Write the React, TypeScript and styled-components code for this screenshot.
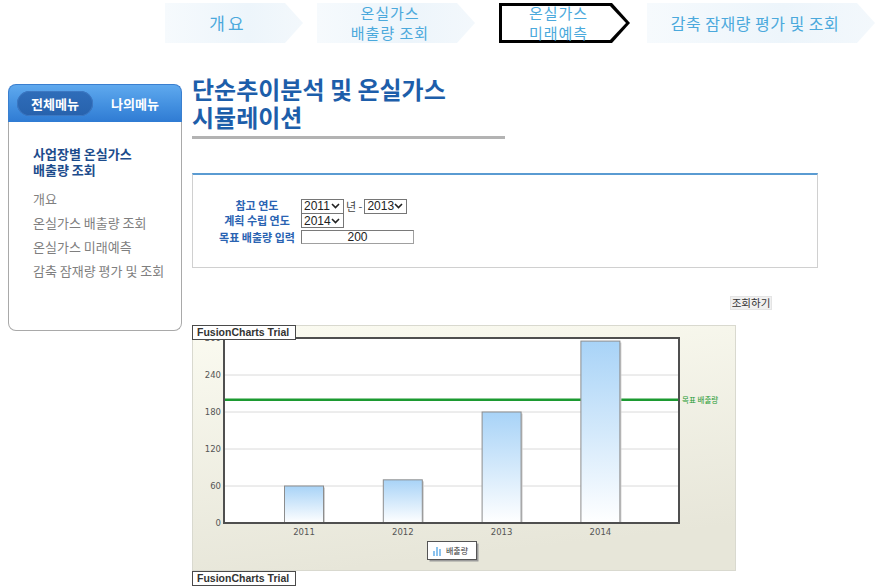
import React from "react";
import styled, { createGlobalStyle, css } from "styled-components";

const GlobalStyle = createGlobalStyle`
  html, body { margin: 0; padding: 0; background: #ffffff; }
  body { font-family: "Noto Sans CJK KR", "Noto Sans", sans-serif; }
`;

const KR = `"Noto Sans CJK KR", "Noto Sans", sans-serif`;

const Page = styled.div`
  width: 879px;
  height: 587px;
  overflow: hidden;
`;

/* ---------- top step navigation ---------- */
const TopNav = styled.nav`
  display: flex;
  height: 40px;
  padding: 3px 0 2px 165px;
`;

const NavItem = styled.div<{ $w: number; $after: number; $active?: boolean }>`
  position: relative;
  flex-shrink: 0;
  box-sizing: border-box;
  width: ${(p) => p.$w}px;
  margin-right: ${(p) => p.$after}px;
  padding-right: 12px;
  display: flex;
  align-items: center;
  justify-content: center;
  text-align: center;
  color: #4ba9dc;
  clip-path: polygon(0 0, calc(100% - 18px) 0, 100% 50%, calc(100% - 18px) 100%, 0 100%);
  background: ${(p) =>
    p.$active ? "#000000" : "linear-gradient(to right, #f6fafd 0%, #edf5fb 60%, #f3f8fc 100%)"};
  ${(p) =>
    p.$active &&
    css`
      &::before {
        content: "";
        position: absolute;
        inset: 3px 4px 3px 3px;
        background: #ffffff;
        clip-path: polygon(0 0, calc(100% - 16px) 0, 100% 50%, calc(100% - 16px) 100%, 0 100%);
      }
    `}
`;

const NavLabel = styled.span<{ $size: number; $ls: number }>`
  position: relative;
  font-family: ${KR};
  font-size: ${(p) => p.$size}px;
  letter-spacing: ${(p) => p.$ls}px;
  line-height: 20px;
  white-space: nowrap;
`;

/* ---------- body ---------- */
const Body = styled.div`
  display: flex;
  align-items: flex-start;
`;

const Sidebar = styled.aside`
  flex-shrink: 0;
  width: 174px;
  margin: 39px 0 0 8px;
`;

const SideHeader = styled.div`
  height: 38px;
  box-sizing: border-box;
  padding: 0 0 0 8px;
  display: flex;
  align-items: center;
  border-radius: 8px 8px 0 0;
  background: linear-gradient(to bottom, #5fa9ee 0%, #4390e0 55%, #2f7bd3 100%);
  border: 1px solid #3a7fcf;
  border-bottom: none;
`;

const SideTab = styled.div<{ $active?: boolean }>`
  height: 25px;
  width: ${(p) => (p.$active ? 76 : 84)}px;
  display: flex;
  align-items: center;
  justify-content: center;
  border-radius: 13px;
  font-family: ${KR};
  font-size: 13px;
  font-weight: 700;
  color: #ffffff;
  background: ${(p) => (p.$active ? "linear-gradient(#2f6db9, #2762ad)" : "transparent")};
  box-shadow: ${(p) => (p.$active ? "inset 0 0 0 1px #3d78c2" : "none")};
`;

const SideBody = styled.div`
  height: 209px;
  box-sizing: border-box;
  padding: 24px 0 0 24px;
  border: 1px solid #a9a9a9;
  border-top: none;
  border-radius: 0 0 8px 8px;
`;

const SideHeading = styled.div`
  font-family: ${KR};
  font-size: 13px;
  font-weight: 700;
  line-height: 16px;
  color: #1d4c8c;
  margin-bottom: 9px;
`;

const SideLink = styled.div`
  font-family: ${KR};
  font-size: 13px;
  line-height: 24px;
  color: #7f7f7f;
`;

const Main = styled.main`
  width: 626px;
  margin: 30px 0 0 10px;
`;

const Title = styled.h1`
  margin: 0;
  font-family: ${KR};
  font-size: 24px;
  font-weight: 700;
  line-height: 28px;
  color: #1d5eaa;
`;

const TitleRule = styled.div`
  width: 313px;
  height: 3px;
  margin-top: 5px;
  background: #b3b3b3;
`;

const FormPanel = styled.section`
  margin-top: 34px;
  height: 95px;
  box-sizing: border-box;
  padding: 23px 0 0 23px;
  border: 1px solid #d0d0d0;
  border-top: 2px solid #5a9bd2;
`;

const FormGrid = styled.div`
  display: grid;
  grid-template-columns: 82px auto;
  grid-template-rows: 15px 17px 14px;
  column-gap: 3px;
  align-items: start;
`;

const FieldLabel = styled.div`
  font-family: ${KR};
  font-size: 11px;
  font-weight: 700;
  line-height: 15px;
  color: #2a63b2;
  text-align: center;
  white-space: nowrap;
`;

const FieldRow = styled.div`
  display: flex;
  align-items: center;
  gap: 2px;
`;

const SelectBox = styled.div`
  width: 43px;
  height: 15px;
  box-sizing: border-box;
  border: 1px solid #767676;
  display: flex;
  align-items: center;
  justify-content: space-between;
  padding: 0 3px 0 2px;
  font-family: "Liberation Sans", Arial, sans-serif;
  font-size: 12px;
  color: #222;
  background: #fff;
`;

const Sep = styled.span`
  font-family: ${KR};
  font-size: 11px;
  color: #444;
  white-space: nowrap;
`;

const TextBox = styled.div`
  width: 113px;
  height: 14px;
  box-sizing: border-box;
  border: 1px solid #a0a0a0;
  border-top-color: #7a7a7a;
  border-left-color: #7a7a7a;
  font-family: "Liberation Sans", Arial, sans-serif;
  font-size: 12px;
  line-height: 12px;
  text-align: center;
  color: #222;
`;

const ButtonRow = styled.div`
  display: flex;
  justify-content: flex-end;
  margin-top: 28px;
  padding-right: 46px;
`;

const SearchButton = styled.button`
  height: 14px;
  width: 42px;
  padding: 0;
  border: 1px solid #e4e4e4;
  background: #f0f0f0;
  font-family: ${KR};
  font-size: 10.5px;
  line-height: 12px;
  color: #333;
`;

const ChartWrap = styled.div`
  position: relative;
  width: 544px;
  height: 246px;
  margin-top: 15px;
`;

const TrialTag = styled.div`
  width: 104px;
  height: 15px;
  box-sizing: border-box;
  border: 1px solid #4a4a4a;
  background: #ffffff;
  padding-left: 4px;
  font-family: "Liberation Sans", Arial, sans-serif;
  font-size: 10.5px;
  font-weight: 700;
  line-height: 13px;
  color: #333;
  white-space: nowrap;
`;

const OverlayTag = styled(TrialTag)`
  position: absolute;
  top: 0;
  left: 0;
`;

const Chevron = () => (
  <svg width="9" height="6" viewBox="0 0 9 6">
    <path d="M1 1 L4.5 4.5 L8 1" fill="none" stroke="#222" strokeWidth="1.6" />
  </svg>
);

const Select = ({ value }: { value: string }) => (
  <SelectBox>
    <span>{value}</span>
    <Chevron />
  </SelectBox>
);

/* ---------- chart ---------- */
const yOf = (v: number) => 198 - (v * 185) / 300;
const bars = [
  { year: "2011", v: 60 },
  { year: "2012", v: 70 },
  { year: "2013", v: 180 },
  { year: "2014", v: 295 },
];

const Chart = () => {
  const axisFont = { fontFamily: "'DejaVu Sans', Verdana, sans-serif", fontSize: 8.5, fill: "#555" };
  return (
    <svg width="544" height="246" viewBox="0 0 544 246" style={{ display: "block" }}>
      <defs>
        <linearGradient id="bg" x1="0" y1="0" x2="0.25" y2="1">
          <stop offset="0" stopColor="#fbfbf1" />
          <stop offset="1" stopColor="#e7e6d9" />
        </linearGradient>
        <linearGradient id="bar" x1="0" y1="0" x2="0" y2="1">
          <stop offset="0" stopColor="#a8d3f7" />
          <stop offset="1" stopColor="#ffffff" />
        </linearGradient>
      </defs>
      <rect x="0.5" y="0.5" width="543" height="245" fill="url(#bg)" stroke="#d9d9cf" />
      <rect x="32" y="13" width="455" height="185" fill="#ffffff" />
      {[60, 120, 180, 240].map((v) => (
        <line key={v} x1="32" x2="487" y1={yOf(v)} y2={yOf(v)} stroke="#dadada" strokeWidth="1" />
      ))}
      {[0, 60, 120, 180, 240, 300].map((v) => (
        <text key={v} x="29" y={yOf(v) + 3} textAnchor="end" {...axisFont}>
          {v}
        </text>
      ))}
      <line x1="32" x2="487" y1={yOf(200)} y2={yOf(200)} stroke="#1c9a31" strokeWidth="2.5" />
      <text x="490" y={yOf(200) + 3} fontFamily={KR} fontSize="7.5" fill="#1c9a31">
        목표 배출량
      </text>
      {bars.map((b, i) => {
        const x = 92.5 + i * 98.8;
        const top = yOf(b.v);
        return (
          <g key={b.year}>
            <rect x={x + 1.5} y={top + 1.5} width="39" height={198 - top - 1.5} fill="#cfcfcf" />
            <rect x={x} y={top} width="39" height={198 - top} fill="url(#bar)" stroke="#8d8d8d" strokeWidth="1" />
            <text x={x + 19.5} y="210" textAnchor="middle" {...axisFont}>
              {b.year}
            </text>
          </g>
        );
      })}
      <rect x="32" y="13" width="455" height="185" fill="none" stroke="#4f4f4f" strokeWidth="2" />
      <rect x="237.5" y="218.5" width="49" height="18" fill="#9a9a9a" />
      <rect x="235.5" y="216.5" width="49" height="18" fill="#ffffff" stroke="#555" strokeWidth="1" />
      <g fill="#8cc3ee">
        <rect x="241" y="226" width="2" height="5" />
        <rect x="244" y="222" width="2" height="9" />
        <rect x="247" y="224" width="2" height="7" />
      </g>
      <text x="254" y="228.5" fontFamily={KR} fontSize="8" fill="#333">
        배출량
      </text>
    </svg>
  );
};

const navItems = [
  { lines: ["개요"], w: 138, after: 14, size: 17, ls: 3 },
  { lines: ["온실가스", "배출량 조회"], w: 158, after: 24, size: 15, ls: 1 },
  { lines: ["온실가스", "미래예측"], w: 131, after: 17, size: 15, ls: 1, active: true },
  { lines: ["감축 잠재량 평가 및 조회"], w: 228, after: 0, size: 16, ls: 0.5 },
];

const sideLinks = ["개요", "온실가스 배출량 조회", "온실가스 미래예측", "감축 잠재량 평가 및 조회"];

export default function App() {
  return (
    <Page>
      <GlobalStyle />
      <TopNav>
        {navItems.map((n, i) => (
          <NavItem key={i} $w={n.w} $after={n.after} $active={n.active}>
            <NavLabel $size={n.size} $ls={n.ls}>
              {n.lines.map((l, j) => (
                <React.Fragment key={j}>
                  {j > 0 && <br />}
                  {l}
                </React.Fragment>
              ))}
            </NavLabel>
          </NavItem>
        ))}
      </TopNav>
      <Body>
        <Sidebar>
          <SideHeader>
            <SideTab $active>전체메뉴</SideTab>
            <SideTab>나의메뉴</SideTab>
          </SideHeader>
          <SideBody>
            <SideHeading>
              사업장별 온실가스
              <br />
              배출량 조회
            </SideHeading>
            {sideLinks.map((l) => (
              <SideLink key={l}>{l}</SideLink>
            ))}
          </SideBody>
        </Sidebar>
        <Main>
          <Title>
            단순추이분석 및 온실가스
            <br />
            시뮬레이션
          </Title>
          <TitleRule />
          <FormPanel>
            <FormGrid>
              <FieldLabel>참고 연도</FieldLabel>
              <FieldRow>
                <Select value="2011" />
                <Sep>년 -</Sep>
                <Select value="2013" />
              </FieldRow>
              <FieldLabel>계획 수립 연도</FieldLabel>
              <FieldRow>
                <Select value="2014" />
              </FieldRow>
              <FieldLabel>목표 배출량 입력</FieldLabel>
              <FieldRow>
                <TextBox>200</TextBox>
              </FieldRow>
            </FormGrid>
          </FormPanel>
          <ButtonRow>
            <SearchButton>조회하기</SearchButton>
          </ButtonRow>
          <ChartWrap>
            <Chart />
            <OverlayTag>FusionCharts Trial</OverlayTag>
          </ChartWrap>
          <TrialTag>FusionCharts Trial</TrialTag>
        </Main>
      </Body>
    </Page>
  );
}
